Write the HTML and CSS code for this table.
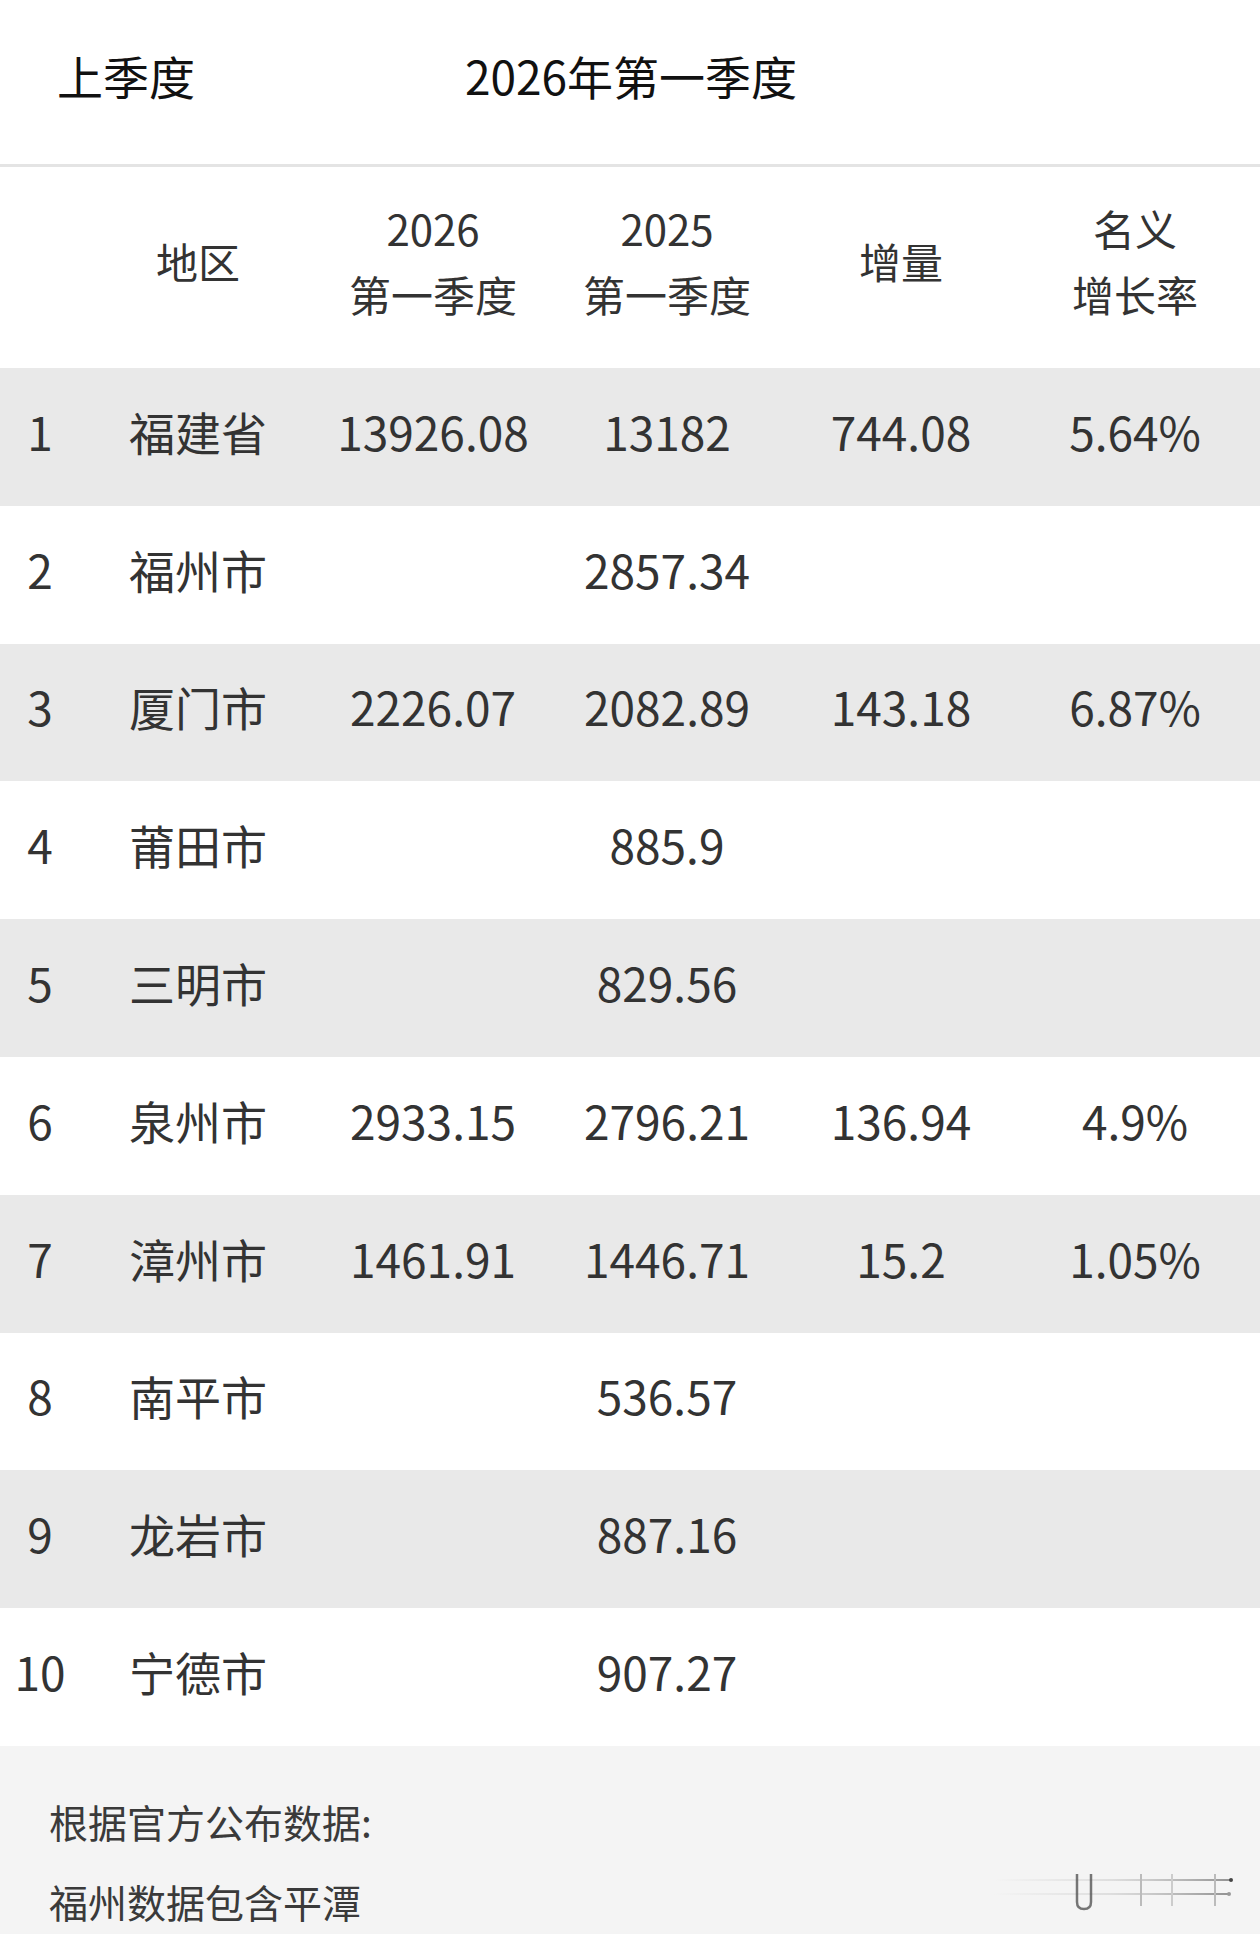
FILE: index.html
```html
<!DOCTYPE html>
<html lang="zh-CN">
<head>
<meta charset="utf-8">
<title>2026年第一季度</title>
<link rel="stylesheet" href="styles.css">
</head>
<body>
<div class="page">
  <div class="tabs">
    <div class="tab tab-left">上季度</div>
    <div class="tab tab-center">2026年第一季度</div>
  </div>
  <div class="table">
    <div class="row head">
      <div class="cell"></div>
      <div class="cell">地区</div>
      <div class="cell two"><span>2026</span><span>第一季度</span></div>
      <div class="cell two"><span>2025</span><span>第一季度</span></div>
      <div class="cell">增量</div>
      <div class="cell two"><span>名义</span><span>增长率</span></div>
    </div>
    <div class="row gray"><div class="cell">1</div><div class="cell">福建省</div><div class="cell">13926.08</div><div class="cell">13182</div><div class="cell">744.08</div><div class="cell">5.64%</div></div>
    <div class="row"><div class="cell">2</div><div class="cell">福州市</div><div class="cell"></div><div class="cell">2857.34</div><div class="cell"></div><div class="cell"></div></div>
    <div class="row gray"><div class="cell">3</div><div class="cell">厦门市</div><div class="cell">2226.07</div><div class="cell">2082.89</div><div class="cell">143.18</div><div class="cell">6.87%</div></div>
    <div class="row"><div class="cell">4</div><div class="cell">莆田市</div><div class="cell"></div><div class="cell">885.9</div><div class="cell"></div><div class="cell"></div></div>
    <div class="row gray"><div class="cell">5</div><div class="cell">三明市</div><div class="cell"></div><div class="cell">829.56</div><div class="cell"></div><div class="cell"></div></div>
    <div class="row"><div class="cell">6</div><div class="cell">泉州市</div><div class="cell">2933.15</div><div class="cell">2796.21</div><div class="cell">136.94</div><div class="cell">4.9%</div></div>
    <div class="row gray"><div class="cell">7</div><div class="cell">漳州市</div><div class="cell">1461.91</div><div class="cell">1446.71</div><div class="cell">15.2</div><div class="cell">1.05%</div></div>
    <div class="row"><div class="cell">8</div><div class="cell">南平市</div><div class="cell"></div><div class="cell">536.57</div><div class="cell"></div><div class="cell"></div></div>
    <div class="row gray"><div class="cell">9</div><div class="cell">龙岩市</div><div class="cell"></div><div class="cell">887.16</div><div class="cell"></div><div class="cell"></div></div>
    <div class="row"><div class="cell">10</div><div class="cell">宁德市</div><div class="cell"></div><div class="cell">907.27</div><div class="cell"></div><div class="cell"></div></div>
  </div>
  <div class="footer">
    <p class="note">根据官方公布数据:</p>
    <p class="note">福州数据包含平潭</p>
    <svg class="watermark" width="240" height="44" viewBox="0 0 240 44" aria-hidden="true">
      <defs>
        <linearGradient id="fade" x1="0" y1="0" x2="1" y2="0">
          <stop offset="0" stop-color="#cfcfcf" stop-opacity="0"/>
          <stop offset="0.5" stop-color="#cfcfcf" stop-opacity="0.6"/>
          <stop offset="1" stop-color="#888888" stop-opacity="0.9"/>
        </linearGradient>
      </defs>
      <rect x="0" y="9" width="236" height="2" fill="url(#fade)"/>
      <rect x="0" y="23" width="234" height="2" fill="url(#fade)"/>
      <path d="M83 4 V32 Q83 39 90 39 Q97 39 97 32 V4" fill="none" stroke="#555" stroke-width="2.5" opacity="0.8"/>
      <line x1="147" y1="4" x2="147" y2="36" stroke="#bbb" stroke-width="2"/>
      <line x1="178" y1="4" x2="178" y2="36" stroke="#ccc" stroke-width="2"/>
      <line x1="221" y1="4" x2="221" y2="36" stroke="#bbb" stroke-width="2"/>
      <circle cx="237" cy="10" r="2" fill="#444"/>
      <circle cx="235" cy="24" r="2" fill="#999"/>
    </svg>
  </div>
</div>
</body>
</html>
```
FILE: styles.css
```css
* {
  box-sizing: border-box;
}

html, body {
  margin: 0;
  padding: 0;
  background: #ffffff;
}

body {
  font-family: "Noto Sans CJK SC", "Noto Sans", sans-serif;
  color: #333333;
}

.page {
  width: 1260px;
  height: 1934px;
  overflow: hidden;
  display: flex;
  flex-direction: column;
}

.tabs {
  flex: none;
  height: 167px;
  border-bottom: 3px solid #e4e4e4;
  display: flex;
  align-items: flex-start;
  padding-top: 45px;
  font-size: 46px;
  line-height: 60px;
  color: #111111;
}

.tab-left {
  width: 465px;
  padding-left: 57px;
}

.tab-center {
  flex: none;
}

.table {
  flex: none;
  display: flex;
  flex-direction: column;
}

.row {
  display: grid;
  grid-template-columns: 80px 236px 234px 234px 234px 234px;
  height: 137.8px;
  padding-bottom: 12px;
  align-items: center;
  font-size: 46px;
  line-height: 60px;
  color: #333333;
}

.row.gray {
  background: #e9e9e9;
}

.row.head {
  height: 201px;
  font-size: 42px;
  line-height: 66px;
  padding-bottom: 13px;
}

.cell {
  text-align: center;
  white-space: nowrap;
}

.cell.two {
  display: flex;
  flex-direction: column;
  align-items: center;
}

.footer {
  position: relative;
  flex: 1 1 auto;
  min-height: 0;
  background: #f4f4f4;
  padding-top: 35px;
  padding-left: 49px;
}

.note {
  margin: 0;
  font-size: 39px;
  line-height: 80px;
  color: #3a3a3a;
}

.watermark {
  position: absolute;
  left: 994px;
  top: 124px;
}
```
